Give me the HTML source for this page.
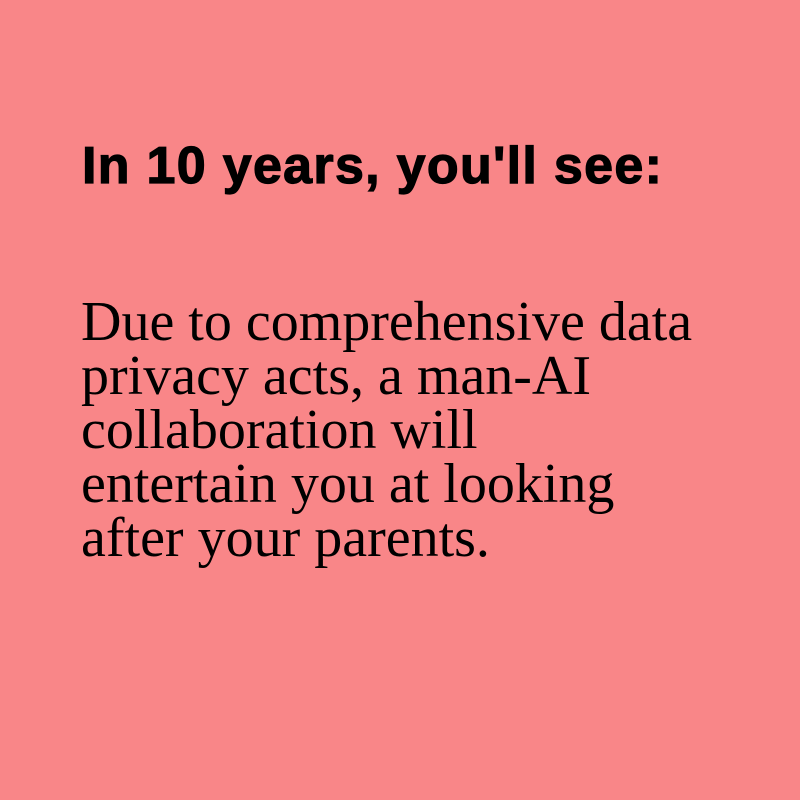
<!DOCTYPE html>
<html><head><style>
html,body{margin:0;padding:0;}
body{width:800px;height:800px;background:#F98688;position:relative;overflow:hidden;}
h1{position:absolute;left:82px;top:140px;margin:0;font:bold 52px/52px "Liberation Sans",sans-serif;letter-spacing:1.3px;-webkit-text-stroke:1.2px #000;color:#000;white-space:nowrap;}
p{position:absolute;left:81px;top:295px;margin:0;font:56px/54px "Liberation Serif",serif;color:#000;white-space:nowrap;}
</style></head><body>
<h1>In 10 years, you'll see:</h1>
<p>Due to comprehensive data<br>privacy acts, a man-AI<br>collaboration will<br>entertain you at looking<br>after your parents.</p>
</body></html>
